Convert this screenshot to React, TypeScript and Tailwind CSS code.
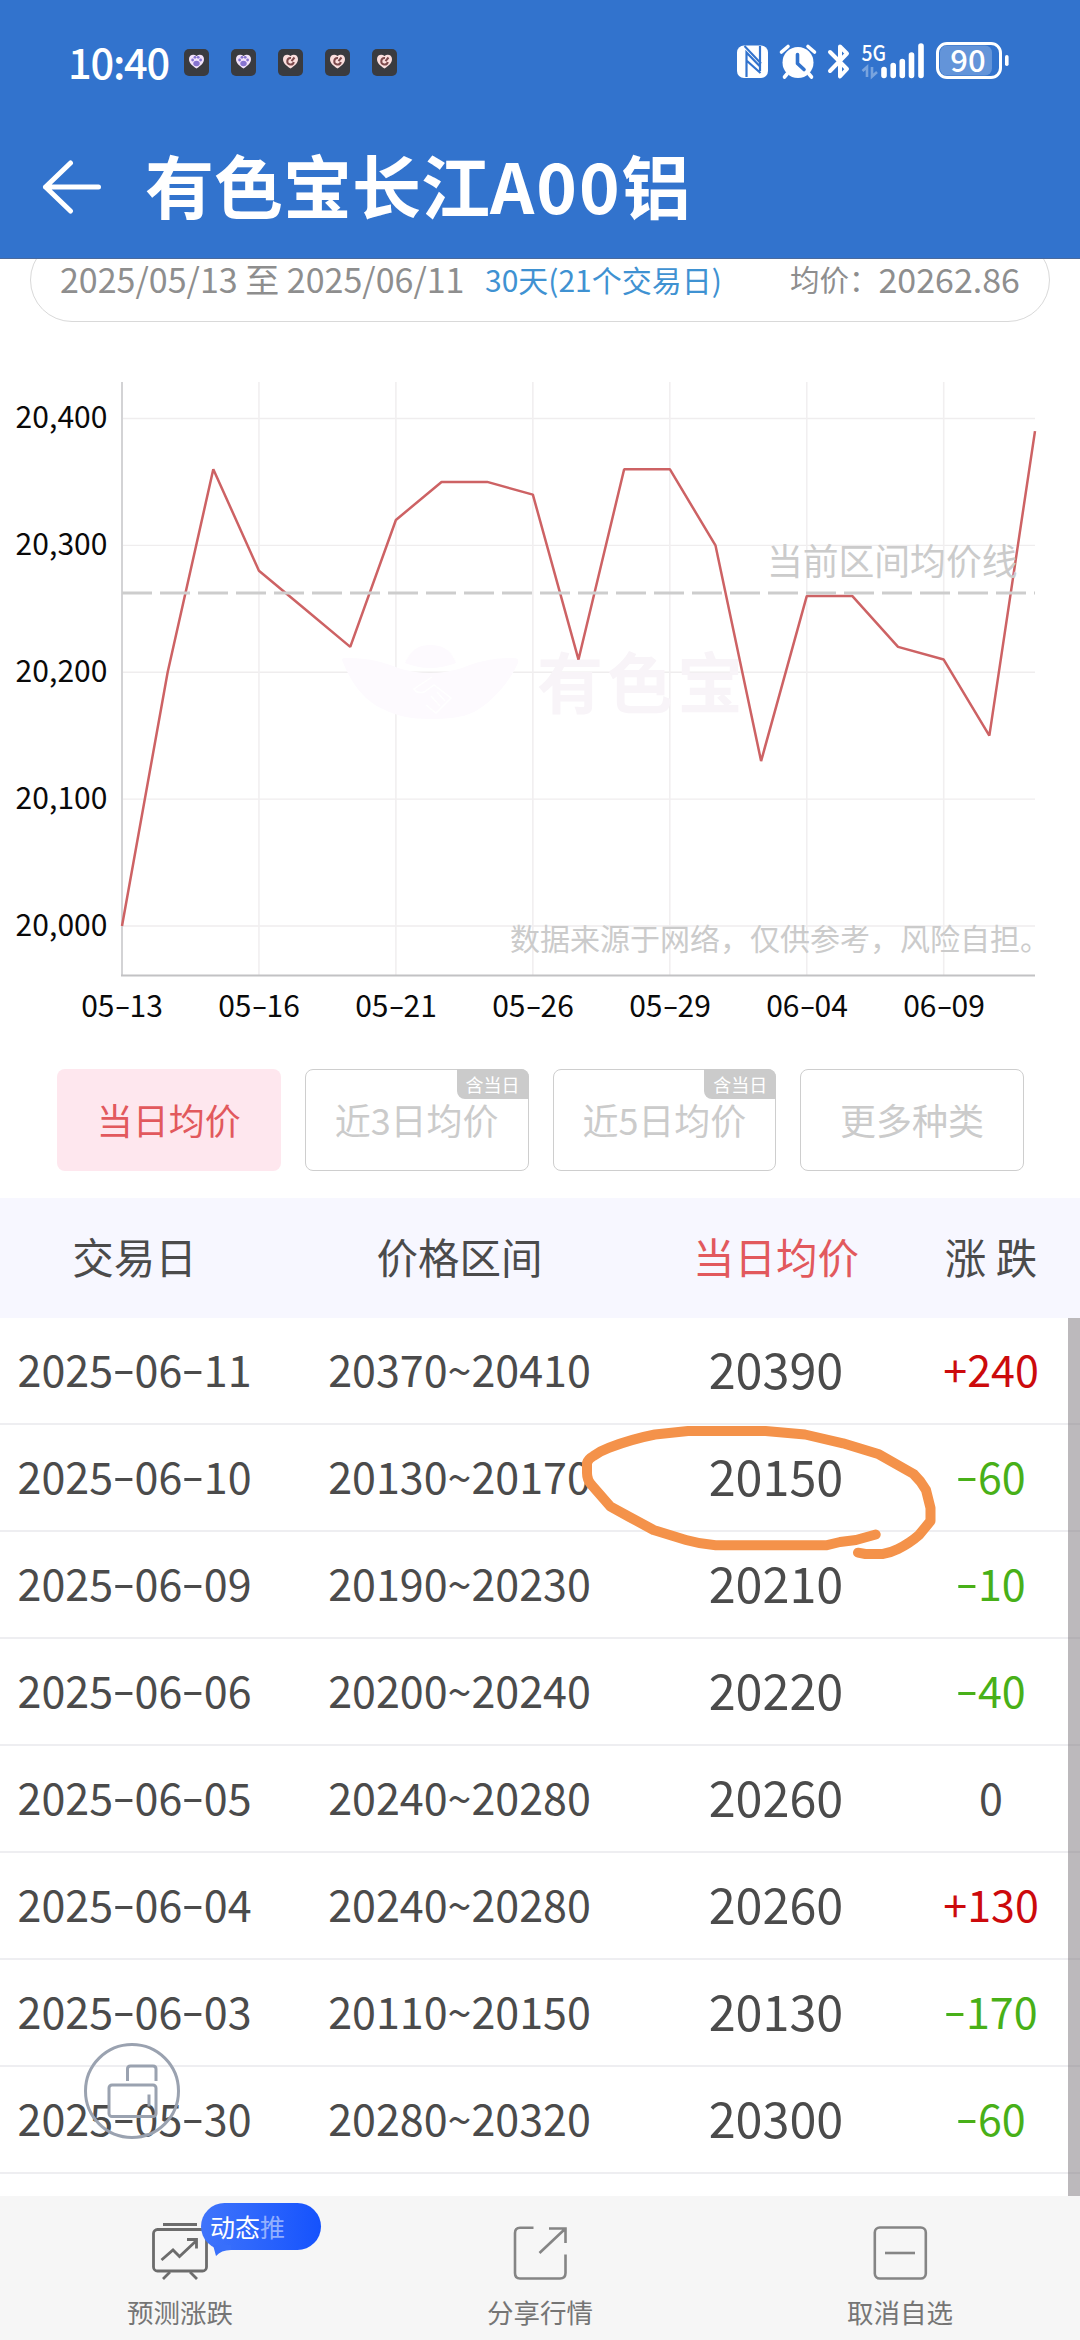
import type { ReactNode } from "react";

const series = [
    20000, 20200, 20360, 20280, 20250, 20220, 20320, 20350, 20350, 20340, 20210,
    20360, 20360, 20300, 20130, 20260, 20260, 20220, 20210, 20150, 20390,
];

const yTicks = [20400, 20300, 20200, 20100, 20000];
const xTicks = ["05-13", "05-16", "05-21", "05-26", "05-29", "06-04", "06-09"];

const rows = [
    { date: "2025-06-11", range: "20370~20410", price: "20390", change: "+240" },
    { date: "2025-06-10", range: "20130~20170", price: "20150", change: "-60" },
    { date: "2025-06-09", range: "20190~20230", price: "20210", change: "-10" },
    { date: "2025-06-06", range: "20200~20240", price: "20220", change: "-40" },
    { date: "2025-06-05", range: "20240~20280", price: "20260", change: "0" },
    { date: "2025-06-04", range: "20240~20280", price: "20260", change: "+130" },
    { date: "2025-06-03", range: "20110~20150", price: "20130", change: "-170" },
    { date: "2025-05-30", range: "20280~20320", price: "20300", change: "-60" },
];

const tabs = [
    { label: "当日均价", active: true },
    { label: "近3日均价", badge: "含当日" },
    { label: "近5日均价", badge: "含当日" },
    { label: "更多种类" },
];

// Hyphens are drawn wider and a little higher than the font's own glyph
const Dashed = ({ text }: { text: string }) => (
    <>
        {text.split("").map((ch, i) =>
            ch === "-" ? (
                <span key={i} className="inline-block w-[0.5em] -translate-y-[0.04em] scale-x-[1.55] text-center">
                    -
                </span>
            ) : (
                ch
            ),
        )}
    </>
);

const AppIcon = ({ paw }: { paw?: boolean }) => (
    <svg width="25" height="27" viewBox="0 0 25 27">
        <rect width="25" height="27" rx="5" fill="#3a3b3f" />
        <path
            d="M12.5 19.5C8 16.5 5 14 5 10C5 6 9.5 4.5 12.5 7C15.5 4.5 20 6 20 10C20 14 17 16.5 12.5 19.5Z"
            fill={paw ? "#f3e3fb" : "#fbdedd"}
        />
        {paw ? (
            <g fill="#8673cf">
                <circle cx="8.6" cy="11" r="1.4" />
                <circle cx="11" cy="8.3" r="1.4" />
                <circle cx="14.2" cy="8.3" r="1.4" />
                <circle cx="16.6" cy="11" r="1.4" />
                <ellipse cx="12.5" cy="14.5" rx="3.2" ry="2.8" />
            </g>
        ) : (
            <path d="M13 9A3.3 3.3 0 1 0 15.8 13M13.5 12.2L16.5 8.5" fill="none" stroke="#7c4a4c" strokeWidth="2" />
        )}
    </svg>
);

const StatusIcons = () => (
    <svg width="288" height="64" viewBox="732 30 288 64" fill="none">
        {/* nfc */}
        <rect x="737" y="45.5" width="31" height="32.5" rx="7" fill="#fff" />
        <path d="M746.5 77V52.5L760.5 67M746.5 60.5L760.5 73M760 46V71" stroke="#3273cd" strokeWidth="2.2" />
        <path d="M744.5 46L761 63.5" stroke="#3273cd" strokeWidth="2" />
        {/* alarm */}
        <circle cx="798" cy="62.5" r="15.5" fill="#fff" />
        <path d="M781.5 52L788 46.5M808 46.5L814.5 52M787 74L784.5 77M809 74L811.5 77" stroke="#fff" strokeWidth="3.6" strokeLinecap="round" />
        <path d="M797.5 54.5V63.5L804 69.5" stroke="#3273cd" strokeWidth="3.6" strokeLinecap="round" strokeLinejoin="round" />
        {/* bluetooth */}
        <path d="M830 52L847 69L840 76.5V46.5L847 53.5L830 71" stroke="#fff" strokeWidth="4" strokeLinejoin="round" strokeLinecap="round" />
        {/* signal */}
        <text x="861.5" y="60.5" fill="#fff" fontSize="21.5" fontWeight="500" textLength="24.5" lengthAdjust="spacingAndGlyphs">
            5G
        </text>
        <path d="M862.5 71L867 67V77M872 67V76.5L877 72" stroke="#fff" strokeOpacity=".35" strokeWidth="2.6" />
        <path d="M884 69.5V75.5M893.2 65.5V75.5M902.3 61.5V75.5M911.5 55V75.5M921 46V75.5" stroke="#fff" strokeWidth="5.6" strokeLinecap="round" />
        {/* battery */}
        <rect x="940" y="45.5" width="52" height="30" rx="7" fill="#fff" fillOpacity=".24" />
        <rect x="937.5" y="43.5" width="63" height="34" rx="9.5" stroke="#fff" strokeWidth="3" />
        <rect x="1005" y="55" width="3.6" height="11" rx="1.8" fill="#fff" />
        <text x="968" y="71.5" fill="#fff" fontSize="31" fontWeight="500" textAnchor="middle">
            90
        </text>
    </svg>
);

const x0 = 122;
const xStep = 913 / 20;
const priceToY = (price: number) => 926 - 360 - (price - 20000) * 1.2688;

const Chart = () => {
    const points = series.map((p, i) => `${x0 + i * xStep},${priceToY(p)}`).join(" ");
    return (
        <svg width="1080" height="620" viewBox="0 0 1080 620" className="block">
            {yTicks.map((t) => (
                <g key={t}>
                    <line x1={x0} x2="1035" y1={priceToY(t)} y2={priceToY(t)} stroke="#efedee" strokeWidth="1.4" />
                    <text x="107.5" y={priceToY(t) + 9.5} textAnchor="end" fontSize="30" fill="#0a0a0a" textLength="92">
                        {t.toLocaleString("en-US")}
                    </text>
                </g>
            ))}
            {xTicks.slice(1).map((t, i) => (
                <line key={t} x1={x0 + (i + 1) * xStep * 3} x2={x0 + (i + 1) * xStep * 3} y1="22" y2="615" stroke="#f1eff0" strokeWidth="1.6" />
            ))}

            {/* watermark */}
            <g fill="#fdfafe">
                <path d="M342 300C342 298 344 298 348 298C368 298 384 302 398 308Q430 318 462 308C476 302 492 298 512 298C517 298 519 299 518 303C508 325 490 343 474 352C462 358 446 359 430 359C412 359 396 356 383 349C362 340 350 320 342 300Z" />
                <path d="M405 303C412 288 420 285 430 285C441 285 450 288 456 303Q430 313 405 303Z" />
            </g>
            <path d="M432 317L414 329Q417 334 424 332L434 325L451 338L436 353L426 345M437 332L445 341M431 336L440 346" fill="none" stroke="#fff" strokeWidth="1.5" />
            <text x="537" y="348" fontSize="66" fontWeight="700" letterSpacing="4" fill="#f8f4f8">
                有色宝
            </text>

            <line x1={x0} x2={x0} y1="22" y2="616" stroke="#d3d3d5" strokeWidth="2" />
            <line x1="121" x2="1035" y1="615.5" y2="615.5" stroke="#c2c2c4" strokeWidth="2" />
            <polyline points={points} fill="none" stroke="#cd6264" strokeWidth="2.5" strokeLinejoin="bevel" />
            <line x1={x0} x2="1035" y1="233" y2="233" stroke="#cdcdcd" strokeWidth="3" strokeDasharray="30 8" />
            <text x="1017.5" y="214.5" textAnchor="end" fontSize="35.8" fill="#cbcbcb">
                当前区间均价线
            </text>
            <text x="510" y="589.5" fontSize="30" fill="#cbcbcb">
                数据来源于网络，仅供参考，风险自担。
            </text>
        </svg>
    );
};

const changeColor = (change: string) => {
    if (change.startsWith("+")) return "text-[#cc0a0c]";
    if (change.startsWith("-")) return "text-[#48b018]";
    return "text-[#4b4b4b]";
};

const cols = "grid grid-cols-[269px_381px_252px_178px] items-center text-center";

const PriceTable = () => (
    <div className="relative text-[#4b4b4b]">
        <div className={`${cols} h-[120px] bg-[#f7f7ff] pb-[3px] text-[41.5px] leading-none`}>
            <span>交易日</span>
            <span>价格区间</span>
            <span className="text-[#e2595d]">当日均价</span>
            <span>涨 跌</span>
        </div>
        {rows.map((r) => (
            <div key={r.date} className={`${cols} h-[107px] border-b-2 border-[#eeeef1] pb-[5px] text-[43px] leading-none`}>
                <span>
                    <Dashed text={r.date} />
                </span>
                <span>{r.range}</span>
                <span className="text-[48.5px]">{r.price}</span>
                <span className={changeColor(r.change)}>
                    <Dashed text={r.change} />
                </span>
            </div>
        ))}
        <div className="absolute top-[120px] right-0 h-[878px] w-3 bg-[#79747a]/50" />

        {/* hand-drawn mark round the 06-10 price */}
        <svg className="absolute top-[222px] left-[570px]" width="380" height="150" viewBox="570 1420 380 150">
            <path
                d="M875.7 1534.5L856 1540L840 1542L826 1545.3H715.6Q700 1544 686 1540L653.6 1530L629.5 1517L610.6 1506.7L591.6 1485Q587 1480 587 1473V1463Q588 1459 593.4 1456Q600 1451 609 1447.7Q632 1439 655 1434.5L688 1431H765.5L805 1434.5L843 1443.3L879 1454.3L913.6 1474Q921 1481 926 1490L930.5 1508V1521L919 1535Q910 1543 898 1549Q890 1553 882.6 1554H865.4L858 1552.7"
                fill="none"
                stroke="#f4924a"
                strokeWidth="10"
                strokeLinecap="round"
                strokeLinejoin="round"
            />
        </svg>

        <svg className="absolute top-[844px] left-[83px]" width="98" height="98" viewBox="83 2042 98 98" fill="none" stroke="#9aa2b0" strokeWidth="3">
            <circle cx="132" cy="2091" r="46.5" />
            <rect x="109" y="2085" width="47" height="31.5" rx="3" />
            <path d="M127.5 2081V2069Q127.5 2066 130.5 2066H153Q156 2066 156 2069V2081M149 2094.5V2106.5" />
        </svg>
    </div>
);

const BottomItem = ({ label, children }: { label: string; children: ReactNode }) => (
    <div className="flex flex-1 flex-col items-center">
        {children}
        <span className="mt-[9px] text-[26.5px] leading-none text-[#757575]">{label}</span>
    </div>
);

const BottomBar = () => (
    <div className="relative flex h-[144px] bg-[#f6f6f6] pt-6">
        <BottomItem label="预测涨跌">
            <svg width="64" height="70" viewBox="148 2220 64 70" fill="none" stroke="#6c6c6c" strokeWidth="2.8">
                <path d="M163 2224.5H197M170 2272L163 2279M190 2272L197 2279" />
                <rect x="153.5" y="2229.5" width="53" height="41.5" rx="4" />
                <path d="M161.5 2260L173 2250L179.5 2256.5L196 2241M187 2239.5H196.5V2248.5" />
            </svg>
        </BottomItem>
        <BottomItem label="分享行情">
            <svg width="64" height="70" viewBox="508 2220 64 70" fill="none" stroke="#858585" strokeWidth="2.6">
                <path d="M533.5 2227.8H520Q515 2227.8 515 2233V2273Q515 2278.5 520 2278.5H560Q565.5 2278.5 565.5 2273V2254.5M549 2228.5H565.5V2243M565.5 2228.5L539.5 2253" />
            </svg>
        </BottomItem>
        <BottomItem label="取消自选">
            <svg width="64" height="70" viewBox="868 2220 64 70" fill="none" stroke="#858585" strokeWidth="2.6">
                <rect x="874.8" y="2227.5" width="51" height="51" rx="5" />
                <path d="M885 2253H915" />
            </svg>
        </BottomItem>

        <div className="absolute top-[7px] left-[201px] flex h-[47px] w-[120px] items-center rounded-full bg-linear-to-r from-[#3f74fb] to-[#1552fd] pl-[9px] text-[25px] leading-none text-white">
            <svg className="absolute top-[42px] left-3" width="18" height="12" viewBox="0 0 18 12">
                <path d="M0 0L3 11Q8 5 18 5V0Z" fill="#386ffb" />
            </svg>
            <span>动态</span>
            <span className="text-white/50">推</span>
        </div>
    </div>
);

export default function App() {
    return (
        <div className="flex h-[2340px] w-[1080px] flex-col overflow-hidden bg-white font-['Noto_Sans_CJK_SC',sans-serif]">
            <header className="relative z-10 h-[259px] shrink-0 border-b border-[#4b6a9c] bg-[#3273cd] text-white">
                <div className="flex h-[124px] items-center pl-[68px]">
                    <span className="w-[116px] text-[41.5px] leading-none font-medium tracking-[-1.2px]">10:40</span>
                    <div className="flex gap-[22px]">
                        <AppIcon paw />
                        <AppIcon paw />
                        <AppIcon />
                        <AppIcon />
                        <AppIcon />
                    </div>
                    <div className="mr-[60px] ml-auto">
                        <StatusIcons />
                    </div>
                </div>
                <div className="flex items-center pt-[28px] pl-[41px]">
                    <svg width="62" height="56" viewBox="41 158 62 56" fill="none" stroke="#fff" strokeWidth="5" strokeLinecap="round" strokeLinejoin="round">
                        <path d="M70.5 163L45.5 187L70.5 211M45.5 187H98.5" />
                    </svg>
                    <h1 className="-mt-[3px] ml-[42px] text-[69px] leading-[70px] font-bold">
                        有色宝长江<span className="tracking-[2px]">A00</span>铝
                    </h1>
                </div>
            </header>

            <section className="-mt-[21px] mb-[38px] ml-[30px] flex h-[84px] w-[1020px] shrink-0 items-center rounded-full border border-[#d9d9d9] pb-[2px] pl-[29px] text-[34px] leading-none text-[#8e8e8e]">
                <span className="w-[425px] whitespace-nowrap">2025/05/13 至 2025/06/11</span>
                <span className="text-[30px] text-[#3f92d2]">30天(21个交易日)</span>
                <span className="mr-[29px] ml-auto flex items-center">
                    <span className="text-[29.5px]">均价：</span>
                    20262.86
                </span>
            </section>

            <Chart />
            <div className="-mt-[11px] mb-px ml-[53.5px] grid w-[959px] shrink-0 grid-cols-7 text-center text-[30px] leading-[70px] text-[#0a0a0a]">
                {xTicks.map((t) => (
                    <span key={t}>
                        <Dashed text={t} />
                    </span>
                ))}
            </div>

            <div className="mt-[29px] mb-[27px] ml-[57px] grid h-[102px] w-[967px] shrink-0 grid-cols-4 gap-6 text-[36px] leading-none">
                {tabs.map((t) => (
                    <div
                        key={t.label}
                        className={
                            t.active
                                ? "flex items-center justify-center rounded-lg bg-[#fee7ee] pb-[3px] text-[#e2595d]"
                                : "relative flex items-center justify-center rounded-lg border border-[#cecece] pb-[3px] text-[#cbcbcb]"
                        }
                    >
                        {t.label}
                        {t.badge && (
                            <span className="absolute -top-px -right-px flex h-[30px] w-[72px] items-center justify-center rounded-tr-lg rounded-bl-lg bg-[#cbcbcb] text-[18px] text-white">
                                {t.badge}
                            </span>
                        )}
                    </div>
                ))}
            </div>

            <div className="h-[998px] shrink-0 overflow-hidden">
                <PriceTable />
            </div>
            <BottomBar />
        </div>
    );
}
